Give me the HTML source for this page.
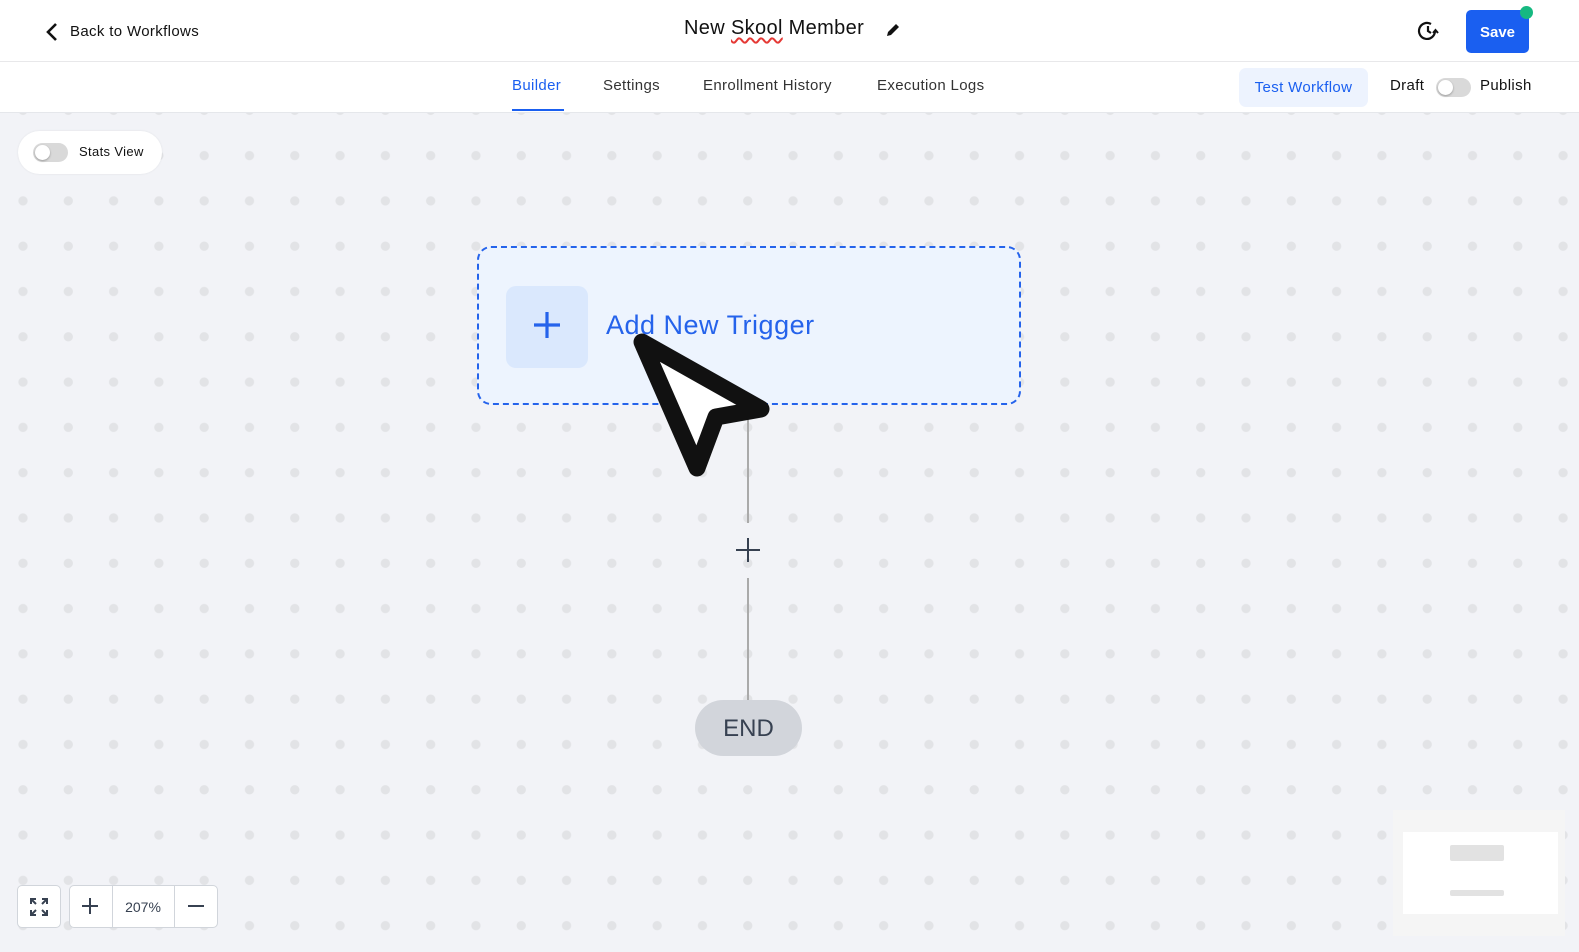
<!DOCTYPE html>
<html><head><style>
*{box-sizing:border-box;margin:0;padding:0}
body{width:1579px;height:952px;overflow:hidden;font-family:"Liberation Sans",sans-serif;background:#f2f3f7;position:relative}
.canvas{position:absolute;left:0;top:0;width:1579px;height:952px;background-color:#f2f3f7;background-image:radial-gradient(circle,#e2e3e6 4.3px,transparent 4.9px);background-size:45.3px 45.3px;background-position:0.35px -2.95px}
.hdr{position:absolute;left:0;top:0;width:1579px;height:113px;background:#fff;border-bottom:1px solid #e5e7eb}
.hdr .sep{position:absolute;left:0;top:61px;width:1579px;height:1px;background:#e8e8ea}
.t{position:absolute;white-space:nowrap}
.ls{letter-spacing:0.35px}
.toggle{position:absolute;width:35px;height:19px;border-radius:10px;background:#d9d9d9}
.toggle::after{content:"";position:absolute;left:2px;top:2px;width:15px;height:15px;border-radius:50%;background:#fff;box-shadow:0 1px 2px rgba(0,0,0,.3)}
</style></head><body>
<div class="canvas"></div>
<div class="hdr"><div class="sep"></div>
<svg class="t" style="left:44px;top:22px" width="16" height="20" viewBox="0 0 16 20"><path d="M12 2 L4 10 L12 18" stroke="#111" stroke-width="2.6" fill="none"/></svg>
<div class="t ls" style="left:70px;top:23px;font-size:15px;color:#111">Back to Workflows</div>
<div class="t ls" style="left:684px;top:17px;font-size:20px;color:#111">New <span style="text-decoration:underline wavy #e53935;text-underline-offset:3px">Skool</span> Member</div>
<svg class="t" style="left:885px;top:22px" width="16" height="16" viewBox="0 0 16 16"><path d="M2 14 L3 10 L11 2 L14 5 L6 13 Z" fill="#111"/></svg>
<svg class="t" style="left:1416px;top:19px" width="24" height="24" viewBox="0 0 24 24"><path d="M19 12 A8 8 0 1 1 15 5" stroke="#111" stroke-width="2.2" fill="none"/><path d="M12 7 V12 L15 14" stroke="#111" stroke-width="2.2" fill="none"/><path d="M17 14 L19.5 11 L22 14" stroke="#111" stroke-width="2" fill="none"/></svg>
<div class="t" style="left:1466px;top:10px;width:63px;height:43px;background:#1a5ff0;border-radius:5px;color:#fff;font-weight:bold;font-size:15px;text-align:center;line-height:45px">Save</div>
<div class="t" style="left:1520px;top:6px;width:13px;height:13px;border-radius:50%;background:#16b981"></div>
<div class="t ls" style="left:512px;top:77px;font-size:15px;color:#1a5ff0">Builder</div>
<div class="t" style="left:512px;top:109px;width:52px;height:2px;background:#1a5ff0"></div>
<div class="t ls" style="left:603px;top:77px;font-size:15px;color:#333">Settings</div>
<div class="t ls" style="left:703px;top:77px;font-size:15px;color:#333">Enrollment History</div>
<div class="t ls" style="left:877px;top:77px;font-size:15px;color:#333">Execution Logs</div>
<div class="t ls" style="left:1239px;top:68px;width:129px;height:39px;background:#edf3fe;border-radius:7px;color:#1a5ff0;font-size:15px;text-align:center;line-height:40px">Test Workflow</div>
<div class="t ls" style="left:1390px;top:77px;font-size:15px;color:#111">Draft</div>
<div class="toggle" style="left:1436px;top:78px"></div>
<div class="t ls" style="left:1480px;top:77px;font-size:15px;color:#111">Publish</div>
</div>
<div class="t" style="left:18px;top:131px;width:144px;height:43px;background:#fff;border-radius:22px;box-shadow:0 0 2px rgba(0,0,0,.08)"></div>
<div class="toggle" style="left:33px;top:143px"></div>
<div class="t ls" style="left:79px;top:144px;font-size:13px;color:#111">Stats View</div>

<div class="t" style="left:477px;top:246px;width:544px;height:159px;border:2px dashed #2563eb;border-radius:14px;background:#edf4fe"></div>
<div class="t" style="left:506px;top:286px;width:82px;height:82px;border-radius:10px;background:#dae8fd"></div>
<svg class="t" style="left:531px;top:309px" width="32" height="32" viewBox="0 0 32 32"><path d="M16 3 V29 M3 16 H29" stroke="#2563eb" stroke-width="3.2"/></svg>
<div class="t" style="left:606px;top:310px;font-size:27px;color:#2563eb;letter-spacing:0.5px">Add New Trigger</div>

<div class="t" style="left:747px;top:404px;width:2px;height:119px;background:#aaa"></div>
<svg class="t" style="left:735px;top:537px" width="26" height="26" viewBox="0 0 26 26"><path d="M13 1 V25 M1 13 H25" stroke="#374151" stroke-width="2"/></svg>
<div class="t" style="left:747px;top:578px;width:2px;height:122px;background:#aaa"></div>
<div class="t" style="left:695px;top:700px;width:107px;height:56px;border-radius:28px;background:#d2d5db;color:#374151;font-size:24px;text-align:center;line-height:58px">END</div>

<svg class="t" style="left:0;top:0;pointer-events:none" width="1579" height="952"><polygon points="642,342 761,409 716,417 697,468" fill="#fff" stroke="#111" stroke-width="17" stroke-linejoin="round"/></svg>

<div class="t" style="left:1393px;top:810px;width:172px;height:126px;background:#f5f5f5"></div>
<div class="t" style="left:1403px;top:832px;width:155px;height:82px;background:#fff"></div>
<div class="t" style="left:1450px;top:845px;width:54px;height:16px;background:#e2e2e2;border-radius:2px"></div>
<div class="t" style="left:1450px;top:890px;width:54px;height:6px;background:#e2e2e2;border-radius:2px"></div>

<div class="t" style="left:17px;top:885px;width:44px;height:43px;background:#fff;border:1px solid #d1d5db;border-radius:5px"></div>
<svg class="t" style="left:28px;top:896px" width="22" height="22" viewBox="0 0 22 22"><g stroke="#374151" stroke-width="2" fill="none"><path d="M3 8 V3 H8 M3 3 L8 8"/><path d="M14 3 H19 V8 M19 3 L14 8"/><path d="M3 14 V19 H8 M3 19 L8 14"/><path d="M19 14 V19 H14 M19 19 L14 14"/></g></svg>
<div class="t" style="left:69px;top:885px;width:149px;height:43px;background:#fff;border:1px solid #d1d5db;border-radius:5px"></div>
<div class="t" style="left:112px;top:886px;width:1px;height:41px;background:#d1d5db"></div>
<div class="t" style="left:174px;top:886px;width:1px;height:41px;background:#d1d5db"></div>
<svg class="t" style="left:81px;top:897px" width="18" height="18" viewBox="0 0 18 18"><path d="M9 1 V17 M1 9 H17" stroke="#374151" stroke-width="2"/></svg>
<div class="t" style="left:112px;top:899px;width:62px;text-align:center;font-size:14px;color:#374151">207%</div>
<svg class="t" style="left:187px;top:897px" width="18" height="18" viewBox="0 0 18 18"><path d="M1 9 H17" stroke="#374151" stroke-width="2"/></svg>
</body></html>
